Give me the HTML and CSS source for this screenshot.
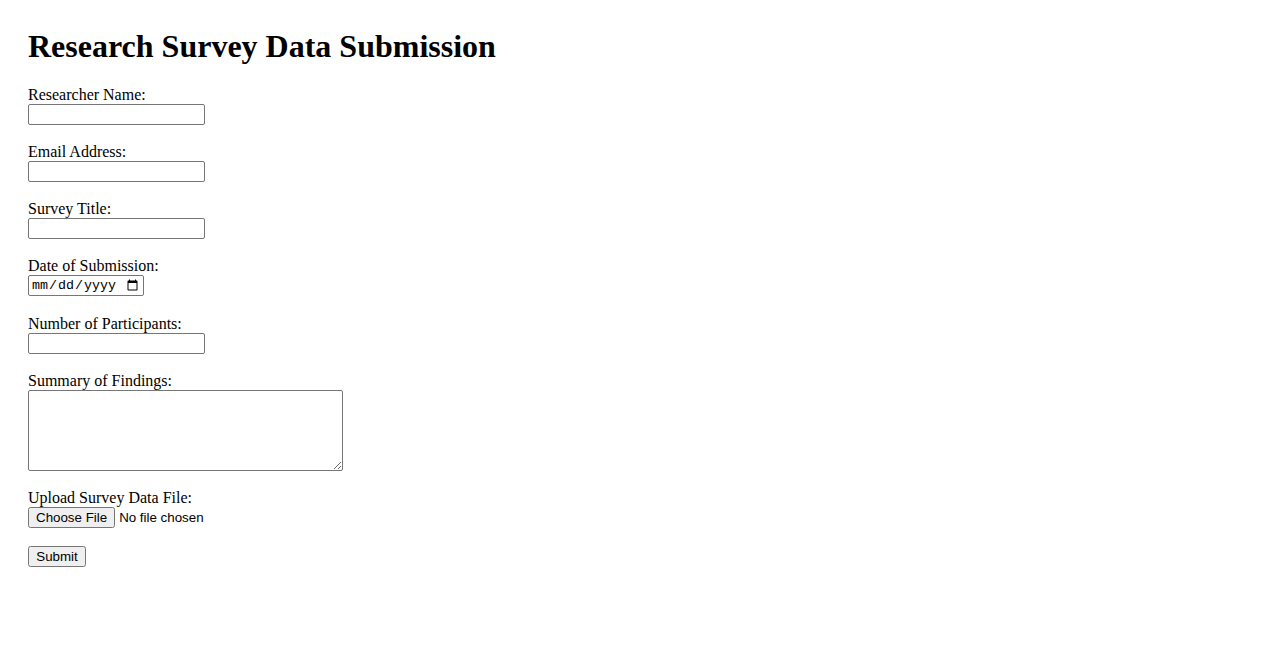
FILE: index.html
```html
<!DOCTYPE html>
<html lang="en">
<head>
<meta charset="utf-8">
<title>Research Survey Data Submission</title>
<link rel="stylesheet" href="styles.css">
</head>
<body>
<h1 class="title">Research Survey Data Submission</h1>
<form class="survey-form">
<label for="name">Researcher Name:</label><br>
<input class="field" type="text" id="name" name="name"><br><br>
<label for="email">Email Address:</label><br>
<input class="field" type="email" id="email" name="email"><br><br>
<label for="survey">Survey Title:</label><br>
<input class="field" type="text" id="survey" name="survey"><br><br>
<label for="date">Date of Submission:</label><br>
<input class="field date" type="date" id="date" name="date"><br><br>
<label for="participants">Number of Participants:</label><br>
<input class="field" type="number" id="participants" name="participants"><br><br>
<label for="summary">Summary of Findings:</label><br>
<textarea class="summary" id="summary" name="summary" rows="4" cols="40"></textarea><br><br>
<label for="file">Upload Survey Data File:</label><br>
<input class="file" type="file" id="file" name="file"><br><br>
<input class="submit" type="submit" value="Submit">
</form>
</body>
</html>
```
FILE: styles.css
```css
body {
  margin: 28px;
  font-family: "Liberation Serif", "Times New Roman", serif;
  font-size: 16px;
  color: #000;
  background: #fff;
}

.title {
  font-size: 32px;
  font-weight: bold;
  margin: 0 0 21.44px;
}

.field,
.file,
.submit {
  font-family: "Liberation Sans", Arial, sans-serif;
  font-size: 13.33px;
}

.field {
  width: 177px;
  height: 21px;
  box-sizing: border-box;
  border: 1px solid #767676;
  border-radius: 2px;
  padding: 1px 2px;
}

.date {
  width: 116px;
  margin-bottom: 1px;
  font-family: "Liberation Mono", "Courier New", monospace;
}

.summary {
  width: 315px;
  height: 81px;
  box-sizing: border-box;
  border: 1px solid #767676;
  border-radius: 2px;
  font-family: "Liberation Mono", monospace;
  font-size: 13.33px;
  vertical-align: bottom;
}

.submit {
  padding: 1px 6px;
  width: 58px;
}
```
